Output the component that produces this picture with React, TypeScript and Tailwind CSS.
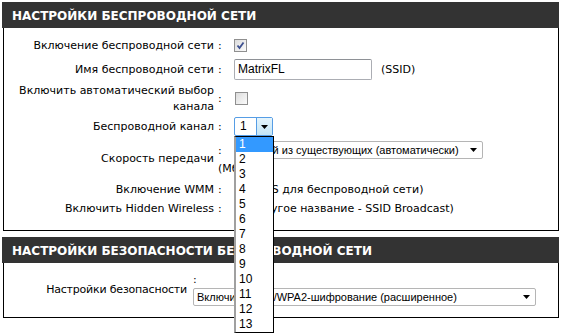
import React from "react";

function Check({ checked = false }: { checked?: boolean }) {
  return (
    <div className="w-[13px] h-[13px] border border-[#8f8f8f] bg-gradient-to-br from-[#dcdcdc] to-[#fbfbfb] flex items-center justify-center shrink-0">
      {checked && (
        <svg width="9" height="9" viewBox="0 0 9 9">
          <path d="M1.5 4.5 L3.5 7 L7.5 1.5" stroke="#3c4f8f" strokeWidth="1.8" fill="none" />
        </svg>
      )}
    </div>
  );
}

function Arrow() {
  return (
    <svg width="7" height="4" viewBox="0 0 7 4" className="shrink-0">
      <path d="M0 0 H7 L3.5 4 Z" fill="#000" />
    </svg>
  );
}

function Colon() {
  return <span className="w-[16px] shrink-0">:</span>;
}

export default function App() {
  const channels = Array.from({ length: 13 }, (_, i) => i + 1);
  return (
    <div className="w-[562px] h-[334px] bg-white overflow-hidden font-['DejaVu_Sans',sans-serif] text-[11px] text-black leading-[13px]">
      <div className="pt-[2px] pl-[2px]">
        <section className="w-[557px]">
          <div className="h-[26px] bg-[#333333] text-white font-bold text-[12px] pl-[10px] pt-[2px] flex items-center">
            НАСТРОЙКИ БЕСПРОВОДНОЙ СЕТИ
          </div>
          <div className="ml-[1px] w-[556px] border-x border-b border-black pt-[5px] pb-[12px]">
            <div className="flex h-[24px] items-center">
              <div className="w-[210px] text-right">Включение беспроводной сети</div>
              <div className="ml-[4px] flex items-center">
                <Colon />
                <Check checked />
              </div>
            </div>
            <div className="flex h-[24px] items-center">
              <div className="w-[210px] text-right">Имя беспроводной сети</div>
              <div className="ml-[4px] flex items-center">
                <Colon />
                <div className="w-[138px] h-[21px] border border-[#abadb3] border-t-[#8e9196] rounded-[2px] pl-[3px] flex items-center font-['Liberation_Sans',sans-serif] text-[12px]">
                  MatrixFL
                </div>
                <span className="ml-[9px]">(SSID)</span>
              </div>
            </div>
            <div className="flex h-[35px] items-center">
              <div className="w-[210px] text-right leading-[16px]">
                Включить автоматический выбор
                <br />
                канала
              </div>
              <div className="ml-[4px] flex items-center">
                <Colon />
                <div className="ml-[1px]">
                  <Check />
                </div>
              </div>
            </div>
            <div className="flex h-[21px] items-center">
              <div className="w-[210px] text-right">Беспроводной канал</div>
              <div className="ml-[4px] flex items-center">
                <Colon />
                <div className="relative z-10 font-['Liberation_Sans',sans-serif] text-[12px]">
                  <div className="w-[39px] h-[19px] border border-[#569de5] rounded-[2px] flex">
                    <div className="flex-1 pl-[5px] flex items-center">1</div>
                    <div className="w-[16px] border-l border-[#569de5] bg-gradient-to-b from-[#e5f4fc] to-[#c4e5f6] flex items-center justify-center">
                      <Arrow />
                    </div>
                  </div>
                  <div className="absolute left-0 top-[19px] w-[40px] bg-white border border-black border-l-2 border-l-[#a0a0a0]">
                    {channels.map((c) => (
                      <div
                        key={c}
                        className={
                          c === 1
                            ? "h-[15px] leading-[15px] pl-[3px] bg-[#3399ff] text-white"
                            : "h-[15px] leading-[15px] pl-[3px]"
                        }
                      >
                        {c}
                      </div>
                    ))}
                  </div>
                </div>
              </div>
            </div>
            <div className="flex h-[42px] items-center">
              <div className="w-[210px] text-right">Скорость передачи</div>
              <div className="ml-[4px] self-start pt-[4px]">
                <div className="flex items-center">
                  <Colon />
                  <div className="w-[249px] h-[18px] border border-[#b5b5b5] rounded-[2px] pl-[4px] pr-[5px] flex items-center justify-between overflow-hidden font-['Liberation_Sans',sans-serif] text-[11px]">
                    <span className="whitespace-nowrap">Лучший из существующих (автоматически)</span>
                    <Arrow />
                  </div>
                </div>
                <div className="pt-[2px] leading-[15px]">(Мбит/с)</div>
              </div>
            </div>
            <div className="flex h-[20px] items-center">
              <div className="w-[210px] text-right">Включение WMM</div>
              <div className="ml-[4px] flex items-center">
                <Colon />
                <Check checked />
                <span className="ml-[5px] whitespace-nowrap">(QoS для беспроводной сети)</span>
              </div>
            </div>
            <div className="flex h-[19px] items-center">
              <div className="w-[210px] text-right">Включить Hidden Wireless</div>
              <div className="ml-[4px] flex items-center">
                <Colon />
                <Check />
                <span className="ml-[5px] whitespace-nowrap">(другое название - SSID Broadcast)</span>
              </div>
            </div>
          </div>
        </section>

        <section className="w-[557px] mt-[6px]">
          <div className="h-[26px] bg-[#333333] text-white font-bold text-[12px] pl-[10px] pt-[2px] flex items-center">
            НАСТРОЙКИ БЕЗОПАСНОСТИ БЕСПРОВОДНОЙ СЕТИ
          </div>
          <div className="ml-[1px] w-[556px] border-x border-b border-black pt-[9px] pb-[11px]">
            <div className="flex items-center">
              <div className="w-[183px] text-right tracking-[-0.2px]">Настройки безопасности</div>
              <div className="ml-[6px]">
                <div className="h-[15px] leading-[15px]">:</div>
                <div className="mt-[1px] w-[343px] h-[18px] border border-[#b5b5b5] rounded-[2px] pl-[3px] pr-[5px] flex items-center justify-between font-['Liberation_Sans',sans-serif] text-[11px]">
                  <span className="whitespace-nowrap">Включить WPA/WPA2-шифрование (расширенное)</span>
                  <Arrow />
                </div>
              </div>
            </div>
          </div>
        </section>
      </div>
    </div>
  );
}
